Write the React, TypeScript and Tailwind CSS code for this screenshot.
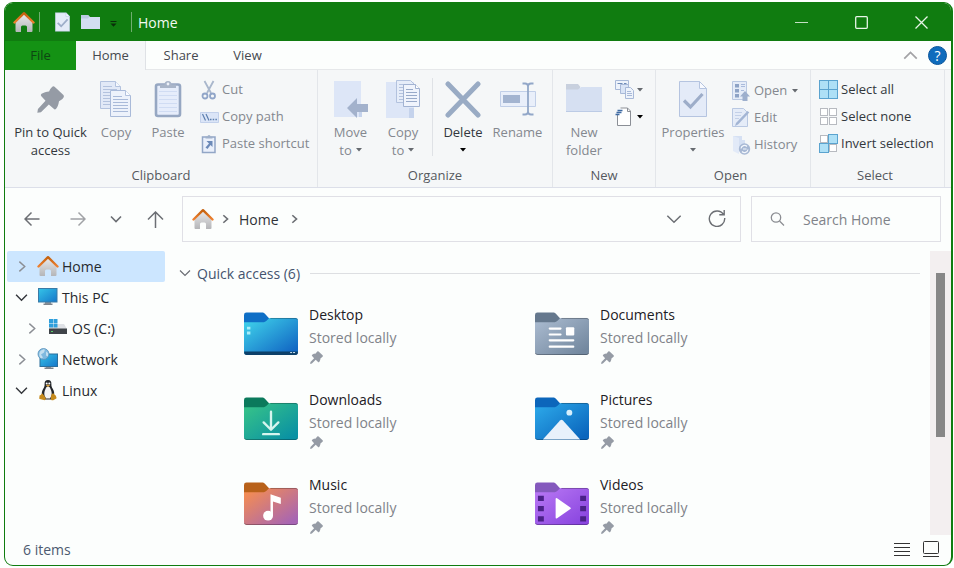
import React, { type ReactNode } from "react";

/* ---------- shared small glyphs ---------- */

function Caret({ className = "" }: { className?: string }) {
  return (
    <svg width="6" height="4" viewBox="0 0 6 4" className={className} aria-hidden="true">
      <path d="M0 0h6L3 3.6z" fill="currentColor" />
    </svg>
  );
}

function Chevron({ dir, size = 12, className = "", stroke = 1.3 }: { dir: "right" | "down" | "up"; size?: number; className?: string; stroke?: number }) {
  const d = dir === "right" ? "M4 1.5l5 4.5-5 4.5" : dir === "down" ? "M1 3.5l5 5 5-5" : "M1 8.5l5-5 5 5";
  return (
    <svg width={size} height={size} viewBox="0 0 12 12" fill="none" stroke="currentColor" strokeWidth={stroke} className={className} aria-hidden="true">
      <path d={d} />
    </svg>
  );
}

function HomeIcon() {
  return (
    <svg width="22" height="22" viewBox="0 0 22 22" aria-hidden="true" className="shrink-0">
      <defs>
        <linearGradient id="wall" x1="0" y1="0" x2="0" y2="1">
          <stop offset="0" stopColor="#e9e9ea" />
          <stop offset="1" stopColor="#b4b5b8" />
        </linearGradient>
        <linearGradient id="roof" x1="0" y1="0" x2="0" y2="1">
          <stop offset="0" stopColor="#c4620f" />
          <stop offset="1" stopColor="#ee8030" />
        </linearGradient>
      </defs>
      <path d="M2.500 11L11 3l8.500 8V20a1 1 0 0 1-1 1H14v-5a1.500 1.500 0 0 0-1.500-1.500h-3A1.500 1.500 0 0 0 8 16v5H3.500a1 1 0 0 1-1-1z" fill="url(#wall)" />
      <path d="M1.500 11.500L11 2.200l9.500 9.300" fill="none" stroke="url(#roof)" strokeWidth="2.400" strokeLinejoin="round" strokeLinecap="round" />
    </svg>
  );
}

function PinIcon({ size }: { size: number }) {
  return (
    <svg width={size} height={size} viewBox="0 0 26 26" fill="#959ba5" aria-hidden="true">
      <path d="M14.500.9q1.300-1.300 2.700 0l8 7.600q1.300 1.400.2 2.700c-1.200 1.600-2.600 2.600-4.200 3.400-.5 3-1.200 5.400-2.800 7.300q-1.100 1.200-2.300.1l-4.700-4.300-7.600 7.500L.3 25.800l.6-3.600 7.300-7.900-4-4.400q-1.100-1.300.2-2.400c2-1.500 4.600-2.100 7.200-2.300.7-1.700 1.600-3.100 2.900-4.300z" />
    </svg>
  );
}

/* ---------- ribbon icons ---------- */

function CopyIcon() {
  return (
    <svg width="32" height="38" viewBox="0 0 32 38" aria-hidden="true">
      <g stroke="#b3c2de" fill="#e2e9f7">
        <path d="M.5 1.500h15l5 5v22H.5z" />
        <path d="M15.500 1.500v5h5" fill="#f5f8fd" />
        <path d="M3 6.500h9M3 9.500h14M3 12.500h14M3 15.500h14M3 18.500h14M3 21.500h14M3 24.500h14" />
        <path d="M10.500 10.500h15l5 5v21h-20z" fill="#edf2fb" stroke="#a9bad9" />
        <path d="M25.500 10.500v5h5" fill="#fafcff" />
        <path d="M13 16.500h9M13 19.500h15M13 22.500h15M13 25.500h15M13 28.500h15M13 31.500h15" stroke="#a9bad9" />
      </g>
    </svg>
  );
}

function PasteIcon() {
  return (
    <svg width="28" height="38" viewBox="0 0 28 38" aria-hidden="true">
      <rect x="2" y="4.500" width="24" height="31.500" rx="2" fill="#e6edfb" stroke="#96a7c2" strokeWidth="2.600" />
      <path d="M5 11.500h18M5 15.500h18M5 19.500h18M5 23.500h18M5 27.500h18M5 31.500h18" stroke="#d0dcf3" />
      <path d="M6 8V4.500h4.500a3.500 3.500 0 0 1 7 0H22V8z" fill="#a9b5c9" />
      <circle cx="14" cy="4" r="1.400" fill="#eef2fa" />
    </svg>
  );
}

function CutIcon() {
  return (
    <svg width="20" height="20" viewBox="0 0 20 20" fill="none" aria-hidden="true">
      <path d="M4.500 1L11 13M13.500 1L7 13" stroke="#a9b7cc" strokeWidth="1.800" />
      <circle cx="5" cy="16" r="2.500" stroke="#90a5c8" strokeWidth="1.800" />
      <circle cx="12.500" cy="16" r="2.500" stroke="#90a5c8" strokeWidth="1.800" />
    </svg>
  );
}

function CopyPathIcon() {
  return (
    <svg width="20" height="20" viewBox="0 0 20 20" fill="none" aria-hidden="true">
      <path d="M.5 5.500h18v10H.5z" fill="#dbe5f7" stroke="#c3d1eb" />
      <path d="M2.500 7l3 6.500M6 7l3 6.500" stroke="#5c7faf" strokeWidth="1.200" />
      <path d="M10 12.500h1.500M12.700 12.500h1.500M15.400 12.500h1.500" stroke="#5c7faf" strokeWidth="1.500" />
    </svg>
  );
}

function PasteShortcutIcon() {
  return (
    <svg width="20" height="20" viewBox="0 0 20 20" fill="none" aria-hidden="true">
      <rect x="2.500" y="3" width="12.500" height="15.500" fill="#eaf0fb" stroke="#92a6c6" strokeWidth="1.500" />
      <path d="M5.500 4.500V2.500h2a1.500 1.500 0 0 1 3 0h2v2z" fill="#9fb0ca" />
      <path d="M6.500 7h6v6l-2-2-3 4-2-1.500L9 9.500z" fill="#6c8ab8" />
    </svg>
  );
}

function MoveIcon() {
  return (
    <svg width="35" height="38" viewBox="0 0 35 38" aria-hidden="true">
      <path d="M1 1h27v36H1z" fill="#dde6f7" />
      <path d="M26 25h3v12h-3z" fill="#c5d3ec" />
      <path d="M14 28l10-10v6h11v8H24v6z" fill="#a3b2cc" />
    </svg>
  );
}

function CopyToIcon() {
  return (
    <svg width="36" height="38" viewBox="0 0 36 38" aria-hidden="true">
      <path d="M1 2h28v36H1z" fill="#dde6f7" />
      <path d="M24 28h5v10h-5z" fill="#c5d3ec" />
      <g stroke="#b3c2de" fill="#e6edf9">
        <path d="M11.500.5h14l4 4v18h-18z" />
        <path d="M14 4.500h8M14 7.500h12M14 10.500h12M14 13.500h12M14 16.500h12M14 19.500h12" />
        <path d="M18.500 4.500h12l4 4v18h-16z" fill="#f0f4fc" stroke="#a2b3d2" />
        <path d="M30.500 4.500v4h4" fill="#fff" stroke="#a2b3d2" />
        <path d="M21 9.500h7M21 12.500h11M21 15.500h11M21 18.500h11M21 21.500h11" stroke="#98aac9" />
      </g>
    </svg>
  );
}

function DeleteIcon() {
  return (
    <svg width="38" height="38" viewBox="0 0 38 38" aria-hidden="true">
      <path d="M4 4l30 31M34 4L4 35" stroke="#99abc4" strokeWidth="5" strokeLinecap="round" />
    </svg>
  );
}

function RenameIcon() {
  return (
    <svg width="38" height="38" viewBox="0 0 38 38" fill="none" aria-hidden="true">
      <path d="M1.500 11.500h35v15h-35z" fill="#e9effa" stroke="#c1cfe8" />
      <path d="M4 15h17v8H4z" fill="#a3b4d0" />
      <path d="M23.500 3.500h2.500q3 0 3 3v25q0 3-3 3h-2.500M34.500 3.500H32q-3 0-3 3v25q0 3 3 3h2.500" stroke="#92a7c8" strokeWidth="1.800" />
    </svg>
  );
}

function NewFolderIcon() {
  return (
    <svg width="38" height="38" viewBox="0 0 38 38" aria-hidden="true">
      <path d="M1 4h12l2 2.500V12H1z" fill="#c8d0de" />
      <path d="M1 9.500h12l3-2.500h21v25H1z" fill="#d6e0f2" />
      <path d="M1 31h36v1H1z" fill="#bccbe5" />
    </svg>
  );
}

function NewItemIcon() {
  return (
    <svg width="20" height="20" viewBox="0 0 20 20" aria-hidden="true">
      <g stroke="#a8b9d8" fill="#eef3fb">
        <path d="M.5.5h13v9H.5z" />
        <path d="M2.500 3.500h5M9 3.500h2.500" stroke="#6f8cb8" />
        <path d="M5.500 4.500h8v9h-8z" fill="#d9e4f6" />
        <path d="M10.500 7.500h5l3 3v8h-8z" />
        <path d="M12 11.500h4M12 13.500h5M12 15.500h5" />
      </g>
    </svg>
  );
}

function EasyAccessIcon() {
  return (
    <svg width="20" height="20" viewBox="0 0 20 20" fill="none" aria-hidden="true">
      <path d="M2.500 8V18.500h13V4l-3-3h-7" fill="#fff" stroke="#8b8f96" />
      <path d="M12.500 1v3.500h3" stroke="#8b8f96" />
      <path d="M2.500 3.500h5M1.500 5.500h5M.5 7.500h4" stroke="#3f6ba3" strokeWidth="1.300" />
    </svg>
  );
}

function PropertiesIcon({ width = 28, height = 38 }: { width?: number; height?: number }) {
  return (
    <svg width={width} height={height} viewBox="0 0 28 38" preserveAspectRatio="none" aria-hidden="true">
      <path d="M.5 1.500h20l7 7v28H.5z" fill="#e4ebf8" stroke="#b5c4e0" />
      <path d="M20.500 1.500v7h7z" fill="#f8faff" stroke="#b5c4e0" />
      <path d="M5 20.500l6.500 6.500L23.500 14" fill="none" stroke="#9dadc9" strokeWidth="3.200" />
    </svg>
  );
}

function OpenIcon() {
  return (
    <svg width="20" height="20" viewBox="0 0 20 20" aria-hidden="true">
      <path d="M.5.5h14v18H.5z" fill="#e5ecf8" stroke="#b9c8e2" />
      <path d="M3 3h4v3.500H3zM3 8h4v3.500H3zM3 13h4v3.500H3z" fill="#8ea3c6" />
      <path d="M9 3.500h4M9 5.500h4M9 9.500h3" stroke="#a9badb" />
      <path d="M13 10l5 5.500h-2.500V20h-5v-4.500H8z" fill="#9dafcd" />
    </svg>
  );
}

function EditIcon() {
  return (
    <svg width="20" height="20" viewBox="0 0 20 20" aria-hidden="true">
      <path d="M.5.500h11l4 4v14H.5z" fill="#e5ecf8" stroke="#b9c8e2" />
      <path d="M3 4.500h7M3 7.500h6M3 10.500h4" stroke="#c3d0e8" />
      <path d="M15.500 3l1.800 1.500L6 16.500 3 18l1-3z" fill="#a3b5d4" />
    </svg>
  );
}

function HistoryIcon() {
  return (
    <svg width="20" height="20" viewBox="0 0 20 20" aria-hidden="true">
      <path d="M1 1h9v4h3v10H1z" fill="#d5e0f3" />
      <path d="M1 1l6 2v16l-6-3z" fill="#e2eaf8" />
      <circle cx="12.500" cy="14" r="5.700" fill="#a7b8d4" />
      <path d="M9 13.500a3.500 3.500 0 0 1 6-2M16 14.500a3.500 3.500 0 0 1-6 2M11 14h3.500" fill="none" stroke="#f2f6fc" strokeWidth="1.200" />
    </svg>
  );
}

function Tiles({ fill }: { fill: boolean[] }) {
  const at = [[0, 0], [9, 0], [0, 9], [9, 9]];
  const order = [...at.keys()].sort((a, b) => Number(fill[a]) - Number(fill[b]));
  return (
    <svg width="20" height="20" viewBox="0 0 20 20" aria-hidden="true">
      {order.map((i) => {
        const [x, y] = at[i];
        return fill[i] ? (
          <rect key={i} x={x + 0.5} y={y + 0.5} width="9" height="9" fill="#aee0f6" stroke="#5aa3cf" />
        ) : (
          <rect key={i} x={x + 1.5} y={y + 1.5} width="7" height="7" fill="#fff" stroke="#b7bac0" />
        );
      })}
    </svg>
  );
}

/* ---------- ribbon layout ---------- */

function Group({ label, className, labelClassName = "", children }: { label: string; className: string; labelClassName?: string; children: ReactNode }) {
  return (
    <section aria-label={label} className={`flex shrink-0 flex-col border-r border-[#e3e6ea] ${className}`}>
      <div className="flex flex-1 items-start">{children}</div>
      <h2 className={`pb-[2px] text-center leading-5 text-[#55595f] ${labelClassName}`}>{label}</h2>
    </section>
  );
}

function BigButton({ icon, line1, line2, caret, enabled, className }: { icon: ReactNode; line1: string; line2?: string; caret?: boolean; enabled?: boolean; className: string }) {
  return (
    <button type="button" className={`flex flex-col items-center whitespace-nowrap pt-[10px] leading-[18px] ${enabled ? "text-[#33373d]" : "text-[#84888f]"} ${className}`}>
      <span className="mb-[5px] flex h-[38px] items-center justify-center">{icon}</span>
      <span>{line1}</span>
      <span className="flex h-[18px] items-center gap-1">
        {line2}
        {caret && <Caret className={enabled ? "text-black" : "text-[#666a70]"} />}
      </span>
    </button>
  );
}

function SmallButton({ icon, label, caret, enabled }: { icon: ReactNode; label: string; caret?: boolean; enabled?: boolean }) {
  return (
    <button type="button" className={`flex h-[27px] items-center whitespace-nowrap ${enabled ? "text-[#33373d]" : "text-[#84888f]"}`}>
      <span className="mr-[2px] flex w-5">{icon}</span>
      {label}
      {caret && <Caret className="ml-[5px] text-[#666a70]" />}
    </button>
  );
}

function Ribbon() {
  return (
    <div className="flex h-[118px] shrink-0 overflow-hidden border-b border-[#dcdfe9] bg-[#f5f7f8] text-[13px]">
      <Group label="Clipboard" className="w-[313px]">
        <BigButton className="ml-[5px] w-[81px]" icon={<PinIcon size={27} />} line1="Pin to Quick" line2="access" enabled />
        <BigButton className="w-[50px]" icon={<CopyIcon />} line1="Copy" />
        <BigButton className="w-[54px]" icon={<PasteIcon />} line1="Paste" />
        <div className="ml-[5px] flex flex-col pt-[6px]">
          <SmallButton icon={<CutIcon />} label="Cut" />
          <SmallButton icon={<CopyPathIcon />} label="Copy path" />
          <SmallButton icon={<PasteShortcutIcon />} label="Paste shortcut" />
        </div>
      </Group>
      <Group label="Organize" className="w-[235px]">
        <BigButton className="ml-[6px] w-[53px]" icon={<MoveIcon />} line1="Move" line2="to" caret />
        <BigButton className="w-[52px]" icon={<CopyToIcon />} line1="Copy" line2="to" caret />
        <div className="mx-[3px] mt-2 h-[78px] w-px bg-[#dfe2e6]" />
        <BigButton className="w-[54px]" icon={<DeleteIcon />} line1="Delete" caret enabled />
        <BigButton className="w-[55px]" icon={<RenameIcon />} line1="Rename" />
      </Group>
      <Group label="New" className="w-[103px]">
        <BigButton className="ml-1 w-[54px]" icon={<NewFolderIcon />} line1="New" line2="folder" />
        <div className="ml-1 flex flex-col pt-[6px]">
          <button type="button" aria-label="New item" className="flex h-[27px] items-center gap-[2px] text-[#666a70]">
            <NewItemIcon />
            <Caret />
          </button>
          <button type="button" aria-label="Easy access" className="flex h-[27px] items-center gap-[2px] text-black">
            <EasyAccessIcon />
            <Caret />
          </button>
        </div>
      </Group>
      <Group label="Open" className="w-[155px]" labelClassName="pr-[5px]">
        <BigButton className="ml-[5px] w-16" icon={<PropertiesIcon />} line1="Properties" caret />
        <div className="ml-[7px] flex flex-col pt-[7px]">
          <SmallButton icon={<OpenIcon />} label="Open" caret />
          <SmallButton icon={<EditIcon />} label="Edit" />
          <SmallButton icon={<HistoryIcon />} label="History" />
        </div>
      </Group>
      <Group label="Select" className="w-[134px]" labelClassName="pr-[5px]">
        <div className="ml-2 flex flex-col pt-[6px]">
          <SmallButton icon={<Tiles fill={[true, true, true, true]} />} label="Select all" enabled />
          <SmallButton icon={<Tiles fill={[false, false, false, false]} />} label="Select none" enabled />
          <SmallButton icon={<Tiles fill={[false, true, true, false]} />} label="Invert selection" enabled />
        </div>
      </Group>
    </div>
  );
}

/* ---------- title bar and tabs ---------- */

function TitleBar() {
  return (
    <header className="flex h-[38px] shrink-0 items-center bg-[#107c10] text-white">
      <div className="flex items-center pl-2">
        <HomeIcon />
        <span className="ml-1 h-5 w-px bg-[#6fae6f]" />
        <button type="button" aria-label="Properties" className="ml-[15px]">
          <PropertiesIcon width={15} height={20} />
        </button>
        <button type="button" aria-label="New folder" className="ml-[11px]">
          <svg width="19" height="16" viewBox="0 0 19 16" aria-hidden="true">
            <path d="M0 1h7l2 2h10v12H0z" fill="#d3def1" />
            <path d="M0 1h7l1.500 1.500L7 4.500H0z" fill="#bccae2" />
          </svg>
        </button>
        <button type="button" aria-label="Customize toolbar" className="ml-[10px] pt-1 text-[#0a2e0a]">
          <svg width="7" height="8" viewBox="0 0 7 8" aria-hidden="true">
            <path d="M.5 1.500h6" stroke="currentColor" />
            <path d="M.5 3.500h6L3.500 6.800z" fill="currentColor" />
          </svg>
        </button>
        <span className="ml-[14px] h-5 w-px bg-[#6fae6f]" />
        <h1 className="ml-[6px] text-[14px] text-[#f2faf2]">Home</h1>
      </div>
      <div className="ml-auto flex">
        <button type="button" aria-label="Minimize" className="flex h-[38px] w-[60px] items-center justify-center">
          <svg width="13" height="13" viewBox="0 0 13 13" stroke="#c4e0c4"><path d="M0 6.500h13" /></svg>
        </button>
        <button type="button" aria-label="Maximize" className="flex h-[38px] w-[60px] items-center justify-center">
          <svg width="13" height="13" viewBox="0 0 13 13" fill="none" stroke="#e8f5e8" strokeWidth="1.300"><rect x=".7" y=".7" width="11.600" height="11.600" rx="1" /></svg>
        </button>
        <button type="button" aria-label="Close" className="flex h-[38px] w-[60px] items-center justify-center">
          <svg width="13" height="13" viewBox="0 0 13 13" stroke="#e8f5e8" strokeWidth="1.300"><path d="M.5.5l12 12M12.500.5l-12 12" /></svg>
        </button>
      </div>
    </header>
  );
}

function Tabs() {
  return (
    <nav aria-label="Ribbon tabs" className="flex h-[29px] shrink-0 items-stretch text-[13px] text-[#45494f]">
      <button type="button" className="w-[71px] bg-[#149214] text-[#0d4512]">File</button>
      <button type="button" className="w-[70px] border-r border-[#dfe2e6] bg-[#f5f7f8]">Home</button>
      <div className="flex flex-1 items-center border-b border-[#e6e8ea] pt-px">
        <button type="button" className="w-[70px]">Share</button>
        <button type="button" className="w-[63px]">View</button>
        <button type="button" aria-label="Collapse ribbon" className="ml-auto text-[#a3a3a6]">
          <Chevron dir="up" size={15} stroke={1.4} />
        </button>
        <button type="button" aria-label="Help" className="ml-[10px] mr-1 flex h-[19px] w-[19px] items-center justify-center rounded-full border border-[#0a559c] bg-[#0f6cbd] text-[14px] leading-4 text-white">?</button>
      </div>
    </nav>
  );
}

/* ---------- navigation row ---------- */

function NavRow() {
  return (
    <div className="flex h-[63px] shrink-0 items-start pl-1 pr-[10px] pt-2 text-[#6c6f74]">
      <div className="flex h-[46px] items-center">
        <button type="button" aria-label="Back" className="flex w-[46px] justify-center">
          <svg width="16" height="16" viewBox="0 0 16 16" fill="none" stroke="currentColor" strokeWidth="1.500"><path d="M15.500 8H1M7.500 1.500L1 8l6.500 6.500" /></svg>
        </button>
        <button type="button" aria-label="Forward" className="flex w-[46px] justify-center text-[#a0a2a6]">
          <svg width="16" height="16" viewBox="0 0 16 16" fill="none" stroke="currentColor" strokeWidth="1.500"><path d="M.5 8H15M8.500 1.500L15 8l-6.500 6.500" /></svg>
        </button>
        <button type="button" aria-label="Recent locations" className="flex w-[30px] justify-center">
          <Chevron dir="down" size={12} stroke={1.6} />
        </button>
        <button type="button" aria-label="Up" className="flex w-12 justify-center">
          <svg width="17" height="17" viewBox="0 0 17 17" fill="none" stroke="currentColor" strokeWidth="1.500"><path d="M8.500 17V1M1 8.500L8.500 1 16 8.500" /></svg>
        </button>
      </div>
      <div className="ml-[3px] flex h-[46px] flex-1 items-center border border-[#e0e0e6] pl-[9px] pr-[14px]">
        <HomeIcon />
        <Chevron dir="right" size={10} stroke={2} className="ml-[6px]" />
        <button type="button" className="ml-[9px] text-[14px] text-[#2f3238]">Home</button>
        <Chevron dir="right" size={10} stroke={2} className="ml-[10px]" />
        <button type="button" aria-label="Previous locations" className="ml-auto">
          <Chevron dir="down" size={16} stroke={1.1} />
        </button>
        <button type="button" aria-label="Refresh" className="ml-[26px] pb-[2px]">
          <svg width="18" height="18" viewBox="0 0 18 18" fill="none" stroke="currentColor" strokeWidth="1.400"><path d="M15.500 5.500A7.700 7.700 0 1 0 16.700 9M16.200 1v4.800h-4.900" /></svg>
        </button>
      </div>
      <label className="ml-[10px] flex h-[46px] w-[190px] items-center border border-[#e0e0e6] pl-[18px]">
        <svg width="15" height="15" viewBox="0 0 15 15" fill="none" stroke="#8b8d92" strokeWidth="1.300" className="shrink-0" aria-hidden="true">
          <circle cx="6" cy="5.500" r="4.700" />
          <path d="M9.500 9l4.500 4.500" />
        </svg>
        <input type="search" aria-label="Search Home" placeholder="Search Home" className="ml-[18px] w-full min-w-0 bg-transparent text-[14px] outline-none placeholder:text-[#808389]" />
      </label>
    </div>
  );
}

/* ---------- navigation tree ---------- */

function MonitorIcon() {
  return (
    <svg width="22" height="20" viewBox="0 0 22 20" aria-hidden="true">
      <defs>
        <linearGradient id="screen" x1="0" y1="0" x2="1" y2="1">
          <stop offset="0" stopColor="#35c4e8" />
          <stop offset="1" stopColor="#1576c9" />
        </linearGradient>
      </defs>
      <path d="M8 15h6v2H8z" fill="#8f969e" />
      <path d="M6.500 16.500h9V18h-9z" fill="#7d848c" />
      <rect x="1.500" y="1.500" width="18.500" height="13.500" fill="url(#screen)" stroke="#3a7ba6" />
    </svg>
  );
}

function DriveIcon() {
  return (
    <svg width="22" height="20" viewBox="0 0 22 20" aria-hidden="true">
      <path d="M4 6h13l3 5H2z" fill="#dfe2e6" />
      <path d="M2 10.500h18V16H2z" fill="#3f4449" />
      <path d="M4 13h2v1H4z" fill="#57d06a" />
      <path d="M2 1h4v4H2zM6.500 1h4v4h-4zM2 5.500h4v4H2zM6.500 5.500h4v4h-4z" fill="#2e9fdc" />
    </svg>
  );
}

function NetworkIcon() {
  return (
    <svg width="22" height="22" viewBox="0 0 22 22" aria-hidden="true">
      <path d="M9 18h5v2H9z" fill="#8f969e" />
      <path d="M7.500 19.500h9V21h-9z" fill="#7d848c" />
      <rect x="3" y="6" width="17.500" height="12.500" fill="url(#screen)" stroke="#2b6f9c" />
      <circle cx="6.500" cy="6" r="5.500" fill="#7fb9df" />
      <path d="M3 3.500q3-3 5-2l-1 3-3 2 2 3-2 1Q1 7.500 3 3.500zM9 3.500l2.500 2-.5 3-2-1z" fill="#c3dff0" />
      <circle cx="6.500" cy="6" r="5.500" fill="none" stroke="#5791ba" strokeWidth=".8" />
    </svg>
  );
}

function TuxIcon() {
  return (
    <svg width="22" height="22" viewBox="0 0 22 22" aria-hidden="true">
      <path d="M11 1c-2.400 0-3.500 1.600-3.400 4 .1 2.300-.3 3-1.500 5C5 11.800 4.500 14 5 16l3 4.500h6l3-4.500c.5-2 0-4.200-1.100-6-1.200-2-1.600-2.700-1.500-5C14.500 2.600 13.400 1 11 1z" fill="#24272b" />
      <path d="M11 7.500c-1.500 0-2 1-2.500 2.500C7.500 12 7 14 7.500 16.500L9 19.500h4l1.500-3c.5-2.500 0-4.500-1-6.500-.5-1.500-1-2.500-2.500-2.500z" fill="#f3f3f3" />
      <circle cx="9.700" cy="4.600" r="1" fill="#fff" />
      <circle cx="12.300" cy="4.600" r="1" fill="#fff" />
      <path d="M8.800 6.300L11 5.400l2.200.9L11 7.900z" fill="#d9a03a" />
      <path d="M5.500 14.500l3 4c.8 1.500-.3 2.900-1.800 2.600L2.800 20c-.8-.3-.6-1-.4-1.800.2-.8-.2-1.600.6-1.900 1.200-.3 1.300-1.800 2.500-1.800zM16.500 14.500c1 .2.800 1.400 2.100 2 .9.400.2 1 .7 1.700.5.700.3 1.100-.4 1.500l-2.700 1.500c-1.400.5-2.700-.4-2.400-2l.5-3.200c.3-1 1.200-1.700 2.200-1.500z" fill="#c58a1c" />
    </svg>
  );
}

const tree = [
  { label: "Home", icon: <HomeIcon />, open: false, indent: false, selected: true },
  { label: "This PC", icon: <MonitorIcon />, open: true, indent: false, selected: false },
  { label: "OS (C:)", icon: <DriveIcon />, open: false, indent: true, selected: false },
  { label: "Network", icon: <NetworkIcon />, open: false, indent: false, selected: false },
  { label: "Linux", icon: <TuxIcon />, open: true, indent: false, selected: false },
];

function Sidebar() {
  return (
    <nav aria-label="Folders" className="w-[162px] shrink-0 pl-[2px] pr-[2px] text-[14px] text-[#26292e]">
      <ul>
        {tree.map((n) => (
          <li key={n.label}>
            <button type="button" className={`flex h-[31px] w-full items-center rounded-[2px] pb-px pr-1 ${n.indent ? "pl-[18px]" : "pl-2"} ${n.selected ? "bg-[#cce6ff]" : ""}`}>
              <Chevron dir={n.open ? "down" : "right"} size={13} stroke={1.3} className={n.open ? "text-[#33363b]" : "text-[#8b8e94]"} />
              <span className="ml-[9px] mr-[3px] flex">{n.icon}</span>
              {n.label}
            </button>
          </li>
        ))}
      </ul>
    </nav>
  );
}

/* ---------- folders ---------- */

function Folder({ id, tab, from, to, children }: { id: string; tab: string; from: string; to: string; children: ReactNode }) {
  return (
    <svg width="54" height="43" viewBox="0 0 55 44" preserveAspectRatio="none" aria-hidden="true">
      <defs>
        <linearGradient id={id} x1="0" y1="0" x2="1" y2="1">
          <stop offset="0.100" stopColor={from} />
          <stop offset="0.900" stopColor={to} />
        </linearGradient>
      </defs>
      <path d="M0 3a2.500 2.500 0 0 1 2.500-2.500H18c1.500 0 2.500.5 3.500 1.500l4 4.500V20H0z" fill={tab} />
      <path d="M0 10.500h19c2 0 3-.5 4.200-1.800l1.300-1.400c.8-.8 1.500-1.100 2.700-1.100h25.300A2.500 2.500 0 0 1 55 8.700v32.800a2.500 2.500 0 0 1-2.500 2.500h-50A2.500 2.500 0 0 1 0 41.500z" fill={`url(#${id})`} />
      <path d="M27 6.600h25.500q1.500 0 2.200 1.500M.3 42q.7 1.500 2.200 1.500h50q1.500 0 2.200-1.500" fill="none" stroke="#000" strokeOpacity=".28" />
      {children}
    </svg>
  );
}

const folders = [
  {
    name: "Desktop",
    icon: (
      <Folder id="fd" tab="#0f6fc6" from="#3ccbe8" to="#1268c4">
        <path d="M.2 40.500h54.600v1a2.500 2.500 0 0 1-2.500 2.500H2.700A2.500 2.500 0 0 1 .2 41.500z" fill="#0d4069" />
        <path d="M3 15h3.500v3H3zM3 20h3.500v3H3z" fill="#a9eefa" />
        <path d="M47 41.500h2M50 41.500h2" stroke="#d3e6f5" />
      </Folder>
    ),
  },
  {
    name: "Documents",
    icon: (
      <Folder id="fo" tab="#65788d" from="#a6b7cc" to="#73889f">
        <path d="M15 17h11M15 23h11M15 29h24M15 35.500h24" stroke="#fff" strokeWidth="2.200" strokeLinecap="round" />
        <rect x="31.500" y="15.500" width="8.500" height="8.500" rx="1" fill="#fff" />
      </Folder>
    ),
  },
  {
    name: "Downloads",
    icon: (
      <Folder id="fw" tab="#0b7a5c" from="#34c08a" to="#0a91a3">
        <path d="M27.500 15v18M20 26l7.500 7.500L35 26M19.500 38h16" fill="none" stroke="#d5f5ee" strokeWidth="2.400" strokeLinecap="round" strokeLinejoin="round" />
      </Folder>
    ),
  },
  {
    name: "Pictures",
    icon: (
      <Folder id="fp" tab="#0c66bb" from="#2aa4e6" to="#0b66bd">
        <path d="M8 43.500L25.500 24q1.500-1.500 3 0L46 43.500z" fill="#e8f1fb" />
        <circle cx="35" cy="16" r="3" fill="#d7effc" />
      </Folder>
    ),
  },
  {
    name: "Music",
    icon: (
      <Folder id="fm" tab="#b8611a" from="#f28c55" to="#a765b3">
        <circle cx="24.500" cy="34.500" r="5" fill="#fff" />
        <path d="M27 35V12.500l10.500 3.500v6.500L29.500 20v15z" fill="#fff" />
      </Folder>
    ),
  },
  {
    name: "Videos",
    icon: (
      <Folder id="fv" tab="#8459bd" from="#b574f2" to="#8a46e0">
        <path d="M3 14h6v5.500H3zM3 24.500h6V30H3zM3 35h6v5.500H3zM46 14h6v5.500h-6zM46 24.500h6V30h-6zM46 35h6v5.500h-6z" fill="#4a2187" />
        <path d="M21 17.500q0-1.500 1.500-.8L36 26q1 .8 0 1.600L22.500 37q-1.500.8-1.500-.8z" fill="#fff" />
      </Folder>
    ),
  },
];

function Files() {
  return (
    <main className="min-w-0 flex-1 overflow-hidden">
      <button type="button" className="mb-[19px] mt-[11px] flex h-[22px] w-full items-center pl-3 pr-[10px] text-[14px] text-[#44546f]">
        <Chevron dir="down" size={12} stroke={1.2} className="text-[#6a6d73]" />
        <span className="ml-[6px] whitespace-nowrap">Quick access (6)</span>
        <span className="ml-[10px] h-px flex-1 bg-[#dddfe2]" />
      </button>
      <ul className="grid grid-cols-[repeat(auto-fill,291px)] pl-[77px]">
        {folders.map((f) => (
          <li key={f.name} className="flex h-[85px] gap-[11px] text-[14px] leading-[23px]">
            <div className="pt-[9px]">{f.icon}</div>
            <div>
              <p className="text-[#1d2025]">{f.name}</p>
              <p className="text-[#808389]">Stored locally</p>
              <span className="mt-[2px] flex pl-px"><PinIcon size={13} /></span>
            </div>
          </li>
        ))}
      </ul>
    </main>
  );
}

export default function App() {
  return (
    <div className="flex h-screen flex-col bg-white pb-[2px] pl-1 pr-px pt-[2px] font-['Open_Sans','Noto_Sans',sans-serif]">
      <div className="flex min-h-0 flex-1 flex-col overflow-hidden rounded-[9px] border border-r-2 border-[#107c10] bg-[#fcfefd]">
        <TitleBar />
        <Tabs />
        <Ribbon />
        <NavRow />
        <div className="flex min-h-0 flex-1">
          <Sidebar />
          <Files />
          <div className="w-[21px] shrink-0 bg-[#f3eff0] pl-[6px] pt-[22px]" aria-hidden="true">
            <div className="h-[164px] w-[9px] bg-[#878787]" />
          </div>
        </div>
        <footer className="flex h-[30px] shrink-0 items-center pb-px pl-[18px] pr-3 text-[14px] text-[#4d5a70]">
          6 items
          <button type="button" aria-label="Details view" className="ml-auto text-[#333]">
            <svg width="16" height="16" viewBox="0 0 16 16" stroke="currentColor"><path d="M0 1.500h16M0 5.500h16M0 9.500h16M0 13.500h16" /></svg>
          </button>
          <button type="button" aria-label="Large icons view" className="ml-[13px] text-[#333]">
            <svg width="16" height="17" viewBox="0 0 16 17" fill="none" stroke="currentColor"><rect x=".5" y=".5" width="15" height="12" rx="1" /><path d="M0 15.500h16" /></svg>
          </button>
        </footer>
      </div>
    </div>
  );
}
